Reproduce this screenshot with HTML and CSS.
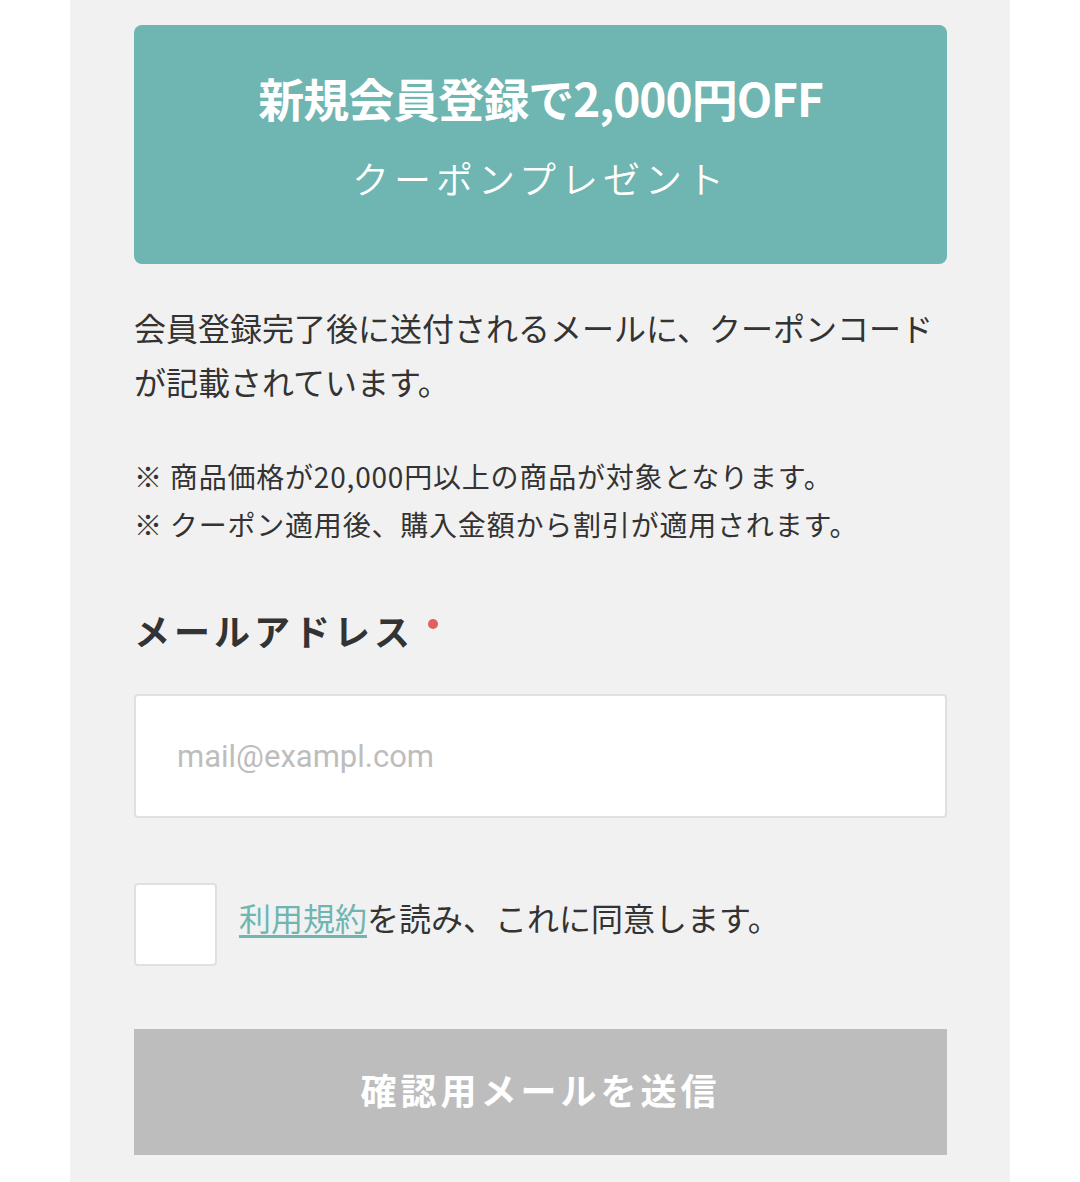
FILE: index.html
```html
<!doctype html>
<html lang="ja">
<head>
    <meta charset="utf-8">
    <title>新規会員登録</title>
    <link rel="stylesheet" href="styles.css">
</head>
<body>
<div class="panel">
    <div class="campaign">
        <p class="campaign-title">新規会員登録で2,000円OFF</p>
        <p class="campaign-sub">クーポンプレゼント</p>
    </div>
    <p class="lead">会員登録完了後に送付されるメールに、クーポンコードが記載されています。</p>
    <ul class="notes">
        <li>※ 商品価格が20,000円以上の商品が対象となります。</li>
        <li>※ クーポン適用後、購入金額から割引が適用されます。</li>
    </ul>
    <form class="signup" onsubmit="return false;">
        <label class="field-label" for="email">メールアドレス<span class="required"></span></label>
        <input class="field-input" id="email" type="email" placeholder="mail@exampl.com">
        <div class="agree">
            <input class="agree-box" type="checkbox" id="agree">
            <label class="agree-text" for="agree"><a href="#">利用規約</a>を読み、これに同意します。</label>
        </div>
        <button class="submit" type="submit" disabled>確認用メールを送信</button>
    </form>
</div>
</body>
</html>
```

FILE: styles.css
```css
html, body {margin: 0; padding: 0; background: #fff;}
body {font-family: "Noto Sans CJK JP", "Noto Sans", sans-serif; color: #333;}
p, ul {margin: 0; padding: 0;}
.panel {width: 940px; min-height: 1182px; margin: 0 auto; padding: 25px 63px 0 64px; box-sizing: border-box; background: #f1f1f1;}

.campaign {background: #6fb5b1; border-radius: 8px; padding: 42px 0 56px; text-align: center; color: #fff;}
.campaign-title {font-size: 46px; font-weight: 700; line-height: 60px; letter-spacing: -1px;}
.campaign-sub {margin-top: 21px; font-size: 37px; font-weight: 350; line-height: 60px; letter-spacing: 5px;}

.lead {margin-top: 36px; font-size: 32px; line-height: 54px; color: #333;}
.notes {margin-top: 44px; list-style: none; font-size: 28px; line-height: 48px; letter-spacing: 0.8px; color: #333;}

.signup {display: flex; flex-direction: column;}
.field-label {display: flex; align-items: center; margin-top: 57px; font-size: 36px; font-weight: 700; line-height: 50px; letter-spacing: 4px; color: #333;}
.required {width: 10px; height: 10px; margin: 0 0 12px 14px; border-radius: 50%; background: #e06060;}
.field-input {margin-top: 39px; height: 124px; box-sizing: border-box; padding: 0 41px; border: 2px solid #e0e0e0; border-radius: 4px; background: #fff; font-family: Roboto, "Noto Sans", sans-serif; font-size: 31px; color: #333; outline: none;}
.field-input::placeholder {color: #bdbdbd;}

.agree {display: flex; align-items: flex-start; margin-top: 65px;}
.agree-box {appearance: none; -webkit-appearance: none; flex: none; box-sizing: border-box; width: 83px; height: 83px; margin: 0; border: 2px solid #e0e0e0; border-radius: 4px; background: #fff;}
.agree-text {margin: 10px 0 0 22px; font-size: 32px; line-height: 48px; color: #333;}
.agree-text a {color: #6fb5b1; text-decoration: underline; text-underline-offset: 4px;}

.submit {margin-top: 63px; height: 126px; border: 0; background: #bdbdbd; color: #fff; font-family: "Noto Sans CJK JP", sans-serif; font-size: 36px; font-weight: 700; line-height: 40px; letter-spacing: 4px; padding: 0 0 6px;}
```
